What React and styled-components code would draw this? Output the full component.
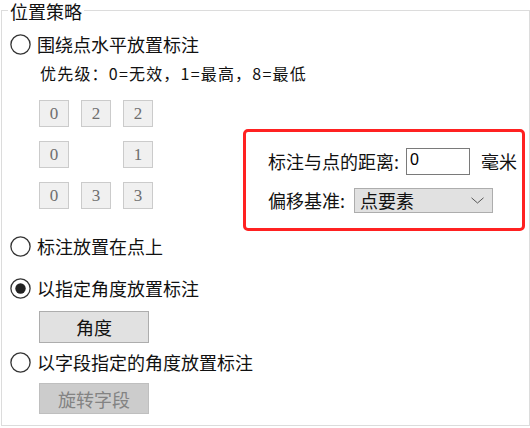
import styled, { createGlobalStyle } from "styled-components"

const GlobalStyle = createGlobalStyle`
  html, body {
    margin: 0;
    padding: 0;
    background: #ffffff;
  }
  body {
    width: 530px;
    height: 428px;
    overflow: hidden;
    font-family: "Noto Sans CJK SC", sans-serif;
    color: #111111;
  }
  * {
    box-sizing: border-box;
  }
`

const prioridades = [
    ["0", "2", "2"],
    ["0", null, "1"],
    ["0", "3", "3"],
]

function Radio({ checked }) {
    return (
        <svg width="21" height="21" viewBox="0 0 21 21">
            <circle cx="10.5" cy="10.5" r="9.6" fill="#ffffff" stroke="#333333" strokeWidth="1.3" />
            {checked && <circle cx="10.5" cy="10.5" r="5.2" fill="#222222" />}
        </svg>
    )
}

function Chevron() {
    return (
        <svg width="13" height="7" viewBox="0 0 13 7">
            <polyline points="0.5,0.8 6.5,6 12.5,0.8" fill="none" stroke="#555555" strokeWidth="1" />
        </svg>
    )
}

export default function App() {
    return (
        <>
            <GlobalStyle />
            <Grupo>
                <Legenda>位置策略</Legenda>

                <OpcaoRadio topo={12}>
                    <Radio />
                    <span>围绕点水平放置标注</span>
                </OpcaoRadio>
                <Subtitulo>优先级：0=无效，1=最高，8=最低</Subtitulo>

                <Meio>
                    <Grade>
                        {prioridades.flat().map((valor, i) =>
                            valor === null
                                ? <span key={i} />
                                : <Celula key={i}>{valor}</Celula>
                        )}
                    </Grade>
                    <CaixaVermelha>
                        <LinhaCampo>
                            <span>标注与点的距离:</span>
                            <Entrada type="text" defaultValue="0" />
                            <Unidade>毫米</Unidade>
                        </LinhaCampo>
                        <LinhaCampo topo={13}>
                            <span>偏移基准:</span>
                            <Seletor>
                                <span>点要素</span>
                                <Chevron />
                            </Seletor>
                        </LinhaCampo>
                    </CaixaVermelha>
                </Meio>

                <OpcaoRadio topo={4}>
                    <Radio />
                    <span>标注放置在点上</span>
                </OpcaoRadio>
                <OpcaoRadio topo={20}>
                    <Radio checked />
                    <span>以指定角度放置标注</span>
                </OpcaoRadio>
                <Botao topo={12}>角度</Botao>
                <OpcaoRadio topo={8}>
                    <Radio />
                    <span>以字段指定的角度放置标注</span>
                </OpcaoRadio>
                <Botao topo={10} desativado>旋转字段</Botao>
            </Grupo>
        </>
    )
}

const Grupo = styled.fieldset`
margin: 0 0 0 1px;
padding: 0 0 0 8px;
width: 529px;
height: 426px;
border: 1px solid #dcdcdc;
min-width: 0;
`

const Legenda = styled.legend`
margin-left: -2px;
padding: 1px 2px 0;
font-size: 18px;
line-height: 20px;
color: #111111;
`

const OpcaoRadio = styled.div`
display: flex;
align-items: center;
gap: 6px;
height: 22px;
margin-top: ${p => p.topo}px;
font-size: 18px;
line-height: 22px;

    svg{
        flex-shrink: 0;
    }
`

const Subtitulo = styled.div`
margin: 8px 0 0 30px;
font-size: 16px;
line-height: 20px;
letter-spacing: 1.2px;
`

const Meio = styled.div`
display: flex;
align-items: flex-start;
`

const Grade = styled.div`
display: grid;
grid-template-columns: repeat(3, 30px);
grid-auto-rows: 27px;
column-gap: 12px;
row-gap: 14px;
margin: 17px 0 0 29px;
`

const Celula = styled.div`
display: flex;
justify-content: center;
align-items: center;
background: #f0f0f0;
border: 1px solid #cbcbcb;
font-family: "Liberation Serif", serif;
font-size: 17px;
color: #6e6e6e;
`

const CaixaVermelha = styled.div`
width: 282px;
height: 102px;
margin: 46px 0 0 90px;
padding: 16px 0 0 22px;
border: 3px solid #ff2121;
border-radius: 5px;
`

const LinhaCampo = styled.div`
display: flex;
align-items: center;
margin-top: ${p => p.topo || 0}px;
font-size: 18px;
line-height: 25px;
`

const Entrada = styled.input`
width: 64px;
height: 27px;
margin-left: 7px;
padding: 0 3px 4px;
border: 1px solid #7a7a7a;
border-radius: 0;
outline: none;
font-family: "Liberation Sans", sans-serif;
font-size: 16px;
color: #000000;
background: #ffffff;
`

const Unidade = styled.span`
margin-left: 11px;
`

const Seletor = styled.div`
display: flex;
justify-content: space-between;
align-items: center;
width: 139px;
height: 25px;
margin-left: 9px;
padding: 0 8px 0 5px;
background: #e1e1e1;
border: 1px solid #adadad;
font-size: 18px;
line-height: 23px;
`

const Botao = styled.button`
display: flex;
justify-content: center;
align-items: center;
width: 110px;
height: ${p => p.desativado ? 31 : 32}px;
margin: ${p => p.topo}px 0 0 29px;
padding: 0;
background: ${p => p.desativado ? "#cccccc" : "#e1e1e1"};
border: 1px solid ${p => p.desativado ? "#bfbfbf" : "#adadad"};
border-radius: 0;
font-family: "Noto Sans CJK SC", sans-serif;
font-size: 18px;
color: ${p => p.desativado ? "#838383" : "#111111"};
`
